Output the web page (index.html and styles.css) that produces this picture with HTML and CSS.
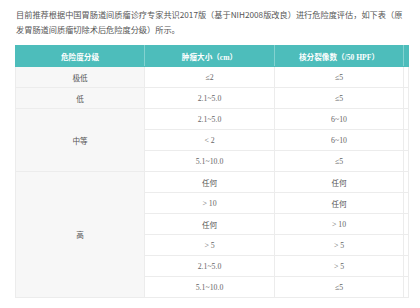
FILE: index.html
```html
<!DOCTYPE html>
<html lang="zh">
<head>
<meta charset="utf-8">
<link rel="stylesheet" href="styles.css">
</head>
<body>
<div class="wrap">
  <p class="intro">目前推荐根据中国胃肠道间质瘤诊疗专家共识2017版（基于NIH2008版改良）进行危险度评估，如下表（原发胃肠道间质瘤切除术后危险度分级）所示。</p>
  <table class="risk">
    <colgroup>
      <col class="c1"><col class="c2"><col class="c3"><col class="c4">
    </colgroup>
    <thead>
      <tr>
        <th>危险度分级</th>
        <th>肿瘤大小（<span class="lat">cm</span>）</th>
        <th>核分裂像数（<span class="lat">/50 HPF</span>）</th>
        <th></th>
      </tr>
    </thead>
    <tbody>
      <tr><td class="grp">极低</td><td class="num">≤2</td><td class="num">≤5</td><td></td></tr>
      <tr><td class="grp">低</td><td class="num">2.1~5.0</td><td class="num">≤5</td><td></td></tr>
      <tr><td class="grp" rowspan="3">中等</td><td class="num">2.1~5.0</td><td class="num">6~10</td><td></td></tr>
      <tr><td class="num">&lt; 2</td><td class="num">6~10</td><td></td></tr>
      <tr><td class="num">5.1~10.0</td><td class="num">≤5</td><td></td></tr>
      <tr><td class="grp" rowspan="6">高</td><td>任何</td><td>任何</td><td></td></tr>
      <tr><td class="num">&gt; 10</td><td>任何</td><td></td></tr>
      <tr><td>任何</td><td class="num">&gt; 10</td><td></td></tr>
      <tr><td class="num">&gt; 5</td><td class="num">&gt; 5</td><td></td></tr>
      <tr><td class="num">2.1~5.0</td><td class="num">&gt; 5</td><td></td></tr>
      <tr><td class="num">5.1~10.0</td><td class="num">≤5</td><td></td></tr>
    </tbody>
  </table>
</div>
</body>
</html>
```

FILE: styles.css
```css
html, body {
  margin: 0;
  padding: 0;
  background: #ffffff;
}
body {
  font-family: "Noto Sans CJK SC", "Noto Sans", sans-serif;
  color: #555555;
}
.wrap {
  padding: 7px 12px 0 15px;
  width: 393px;
}
.intro {
  margin: 0 0 8px 1px;
  font-size: 8.2px;
  line-height: 15px;
  color: #555555;
}
.risk {
  border-collapse: collapse;
  table-layout: fixed;
  width: 393px;
  font-size: 7.6px;
}
.c1 { width: 129px; }
.c2 { width: 130px; }
.c3 { width: 129px; }
.c4 { width: 5px; }
.risk th {
  background: #4dbdbb;
  color: #ffffff;
  font-weight: bold;
  height: 20px;
  padding: 0;
  border: 1px solid #4dbdbb;
  border-right-color: #83d2d0;
  text-align: center;
}
.risk th:last-child {
  border-right-color: #4dbdbb;
}
.lat {
  font-family: "Liberation Serif", serif;
}
.risk td {
  height: 20px;
  padding: 0;
  border: 1px solid #ececec;
  text-align: center;
  color: #555555;
  background: #ffffff;
}
.risk td.grp {
  background: #f7f7f7;
}
.risk td.num {
  font-family: "Liberation Serif", serif;
  font-size: 7.8px;
  color: #666666;
}
```
